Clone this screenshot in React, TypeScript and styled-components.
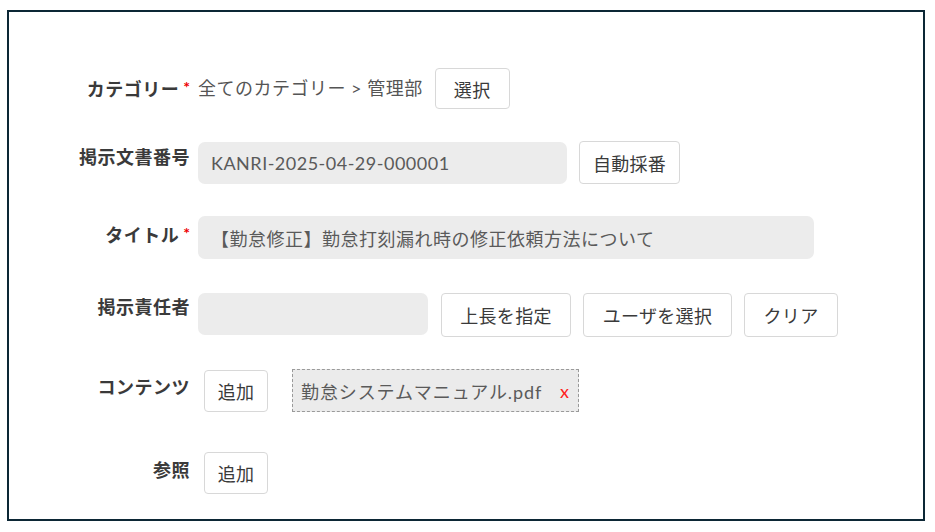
import React from "react";
import styled, { createGlobalStyle } from "styled-components";

const Global = createGlobalStyle`
  html, body { margin: 0; padding: 0; background: #ffffff; }
  body {
    font-family: "Lato", "Noto Sans CJK JP", sans-serif;
    color: #333;
  }
  * { box-sizing: border-box; }
`;

const Frame = styled.div`
  margin: 10px 0 0 7px;
  width: 918px;
  height: 511px;
  border: 2px solid #0c2735;
  padding-top: 56px;
`;

const Form = styled.div`
  display: flex;
  flex-direction: column;
  gap: 32px;
`;

const Row = styled.div<{ $h: number; $mt?: number }>`
  display: flex;
  align-items: flex-start;
  gap: 8px;
  min-height: ${(p) => p.$h}px;
  margin-top: ${(p) => p.$mt ?? 0}px;
`;

const Label = styled.div<{ $pt: number }>`
  width: 181px;
  flex: none;
  text-align: right;
  font-size: 18px;
  font-weight: 700;
  color: #3a3a3a;
  line-height: 26px;
  padding-top: ${(p) => p.$pt}px;
  letter-spacing: 0.5px;
  white-space: nowrap;
`;

const Req = styled.span`
  color: #ee0000;
  font-size: 16px;
  font-weight: 700;
  margin-left: 4px;
  vertical-align: 3px;
  letter-spacing: 0;
`;

const Field = styled.div<{ $gap?: number; $pl?: number; $mt?: number }>`
  display: flex;
  align-items: center;
  gap: ${(p) => p.$gap ?? 12}px;
  padding-left: ${(p) => p.$pl ?? 0}px;
  margin-top: ${(p) => p.$mt ?? 0}px;
`;

const Path = styled.span`
  font-size: 18px;
  letter-spacing: 0.5px;
  color: #555;
  line-height: 41px;
  white-space: nowrap;
`;

const Input = styled.div<{ $w: number; $h: number }>`
  width: ${(p) => p.$w}px;
  height: ${(p) => p.$h}px;
  background: #ececec;
  border-radius: 7px;
  padding-left: 13px;
  display: flex;
  align-items: center;
  font-size: 18px;
  letter-spacing: 0.5px;
  color: #5a5a5a;
  white-space: nowrap;
`;

const Button = styled.button<{ $w: number; $h: number }>`
  width: ${(p) => p.$w}px;
  height: ${(p) => p.$h}px;
  flex: none;
  background: #fff;
  border: 1px solid #d8d8d8;
  border-radius: 4px;
  font-family: "Lato", "Noto Sans CJK JP", sans-serif;
  font-size: 18px;
  letter-spacing: 0.3px;
  color: #3a3a3a;
  padding: 0;
  cursor: pointer;
`;

const FileChip = styled.div`
  display: flex;
  align-items: center;
  height: 43px;
  width: 287px;
  padding: 0 8px;
  background: #ebebeb;
  border: 1px dashed #9a9a9a;
  font-size: 18px;
  color: #5a5a5a;
  white-space: nowrap;
`;

const FileName = styled.span`
  letter-spacing: 0.9px;
  flex: 1;
`;

const Remove = styled.span`
  color: #ff2020;
  font-size: 18px;
  margin-right: 1px;
  cursor: pointer;
`;

export default function App() {
  return (
    <>
      <Global />
      <Frame>
        <Form>
          <Row $h={41}>
            <Label $pt={6}>
              カテゴリー<Req>*</Req>
            </Label>
            <Field $gap={12}>
              <Path>全てのカテゴリー &gt; 管理部</Path>
              <Button $w={75} $h={41}>選択</Button>
            </Field>
          </Row>
          <Row $h={42}>
            <Label $pt={3}>掲示文書番号</Label>
            <Field $gap={12}>
              <Input $w={369} $h={42}>KANRI-2025-04-29-000001</Input>
              <Button $w={101} $h={43}>自動採番</Button>
            </Field>
          </Row>
          <Row $h={43}>
            <Label $pt={4}>
              タイトル<Req>*</Req>
            </Label>
            <Field>
              <Input $w={616} $h={43}>
                【勤怠修正】勤怠打刻漏れ時の修正依頼方法について
              </Input>
            </Field>
          </Row>
          <Row $h={45}>
            <Label $pt={3}>掲示責任者</Label>
            <Field $gap={13}>
              <Input $w={230} $h={42} />
              <Field $gap={12} $mt={2}>
                <Button $w={130} $h={44}>上長を指定</Button>
                <Button $w={149} $h={44}>ユーザを選択</Button>
                <Button $w={94} $h={44}>クリア</Button>
              </Field>
            </Field>
          </Row>
          <Row $h={43}>
            <Label $pt={5}>コンテンツ</Label>
            <Field $gap={24} $pl={6}>
              <Button $w={64} $h={42}>追加</Button>
              <FileChip>
                <FileName>勤怠システムマニュアル.pdf</FileName>
                <Remove>x</Remove>
              </FileChip>
            </Field>
          </Row>
          <Row $h={42} $mt={8}>
            <Label $pt={5}>参照</Label>
            <Field $pl={6}>
              <Button $w={64} $h={42}>追加</Button>
            </Field>
          </Row>
        </Form>
      </Frame>
    </>
  );
}
